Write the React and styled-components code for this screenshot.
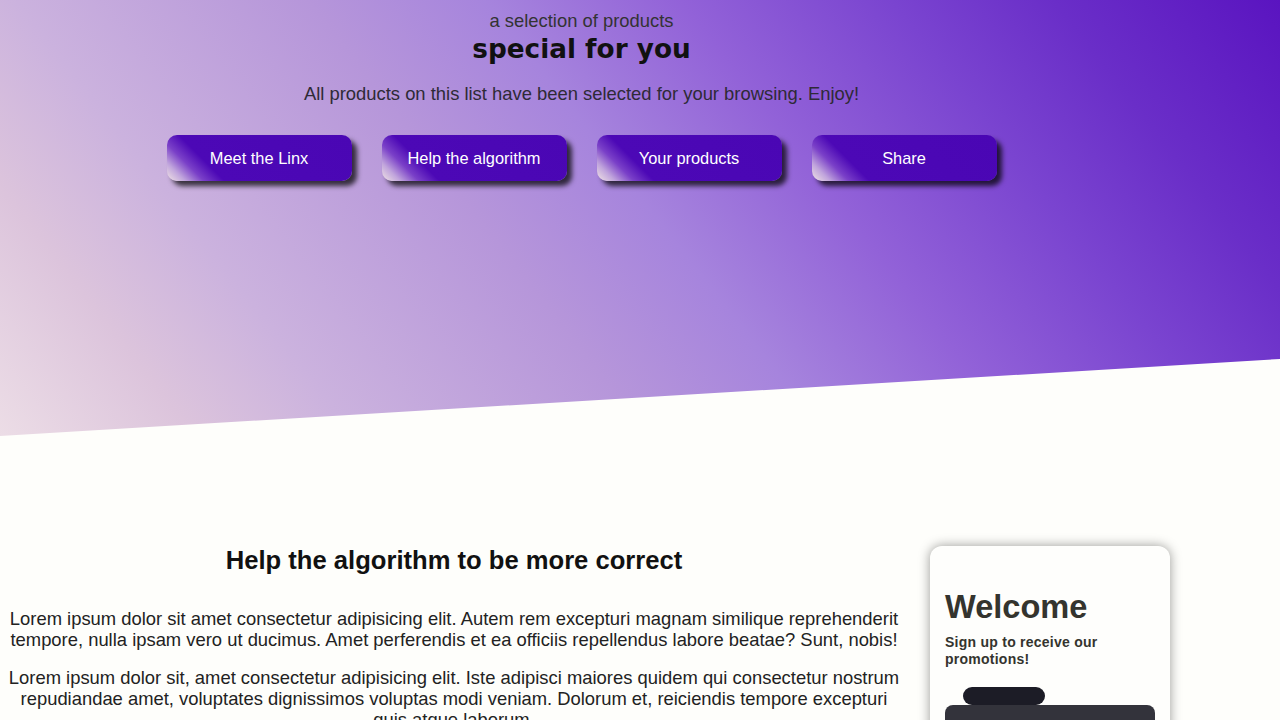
import React from "react";
import styled, { createGlobalStyle } from "styled-components";

const GlobalStyle = createGlobalStyle`
  html, body { margin: 0; padding: 0; }
  body {
    background: #fefefb;
    font-family: "Liberation Sans", Arial, sans-serif;
    color: #1e1e1e;
  }
  * { box-sizing: border-box; }
`;

const Hero = styled.header`
  height: 436px;
  padding: 10px 117px 0 0;
  display: flex;
  flex-direction: column;
  align-items: center;
  clip-path: polygon(0 0, 100% 0, 100% 359px, 0 100%);
  background: linear-gradient(
    52deg,
    #ecdde6 0%,
    #dcc4dc 12%,
    #cbb2de 22%,
    #b696da 40%,
    #a684dd 51%,
    #9262d8 63%,
    #7a44d0 76%,
    #6a2ec8 86%,
    #5a14c0 100%
  );
`;

const Kicker = styled.p`
  margin: 0;
  font-size: 18.4px;
  line-height: 21px;
  color: #333;
`;

const Title = styled.h1`
  margin: 0;
  font-family: "DejaVu Sans", "Liberation Sans", sans-serif;
  font-weight: 700;
  font-size: 26.3px;
  line-height: 36px;
  color: #111;
`;

const Lead = styled.p`
  margin: 16px 0 0;
  font-size: 18.4px;
  line-height: 21px;
  color: #2e2a36;
`;

const NavRow = styled.nav`
  display: flex;
  gap: 30px;
  margin-top: 31px;
`;

const NavButton = styled.button`
  width: 185px;
  height: 46px;
  border: none;
  border-radius: 10px;
  padding: 0;
  font-family: "Liberation Sans", Arial, sans-serif;
  font-size: 16.4px;
  color: #fff;
  cursor: pointer;
  background: linear-gradient(
    45deg,
    #f2e6e4 0%,
    #c0a4dc 8%,
    #7a40c8 16%,
    #4c08b6 25%,
    #4a06b4 100%
  );
  box-shadow: 5px 5px 5px rgba(0, 0, 0, 0.72);
`;

const Main = styled.main`
  display: grid;
  grid-template-columns: 892px 240px;
  column-gap: 30px;
  align-items: start;
  padding: 110px 8px 0;
`;

const Article = styled.section`
  text-align: center;
`;

const SectionTitle = styled.h2`
  margin: 0 0 35px;
  font-size: 25.6px;
  line-height: 28px;
  font-weight: 700;
  color: #111;
`;

const Paragraph = styled.p`
  margin: 0 0 18px;
  font-size: 18.4px;
  line-height: 20.7px;
  color: #222;
`;

const Card = styled.aside`
  background: #fefefc;
  border-radius: 12px;
  box-shadow: 0 0 12px rgba(0, 0, 0, 0.4);
  padding: 42px 15px 40px;
  min-height: 320px;
`;

const CardTitle = styled.h2`
  margin: 0;
  font-size: 32.6px;
  line-height: 37px;
  font-weight: 700;
  color: #34342e;
`;

const CardText = styled.p`
  margin: 9px 0 0;
  font-size: 14px;
  line-height: 17px;
  font-weight: 700;
  letter-spacing: 0.25px;
  color: #34342e;
`;

const Tab = styled.div`
  width: 82px;
  height: 18px;
  margin: 19px 0 0 18px;
  border-radius: 9px;
  background: #1c1c26;
`;

const Field = styled.div`
  height: 56px;
  border-radius: 8px;
  background: #33333b;
`;

const buttons = ["Meet the Linx", "Help the algorithm", "Your products", "Share"];

export default function App() {
  return (
    <>
      <GlobalStyle />
      <Hero>
        <Kicker>a selection of products</Kicker>
        <Title>special for you</Title>
        <Lead>All products on this list have been selected for your browsing. Enjoy!</Lead>
        <NavRow>
          {buttons.map((b) => (
            <NavButton key={b}>{b}</NavButton>
          ))}
        </NavRow>
      </Hero>
      <Main>
        <Article>
          <SectionTitle>Help the algorithm to be more correct</SectionTitle>
          <Paragraph>
            Lorem ipsum dolor sit amet consectetur adipisicing elit. Autem rem excepturi magnam
            similique reprehenderit tempore, nulla ipsam vero ut ducimus. Amet perferendis et ea
            officiis repellendus labore beatae? Sunt, nobis!
          </Paragraph>
          <Paragraph>
            Lorem ipsum dolor sit, amet consectetur adipisicing elit. Iste adipisci maiores quidem
            qui consectetur nostrum repudiandae amet, voluptates dignissimos voluptas modi veniam.
            Dolorum et, reiciendis tempore excepturi quis atque laborum.
          </Paragraph>
        </Article>
        <Card>
          <CardTitle>Welcome</CardTitle>
          <CardText>Sign up to receive our promotions!</CardText>
          <Tab />
          <Field />
        </Card>
      </Main>
    </>
  );
}
